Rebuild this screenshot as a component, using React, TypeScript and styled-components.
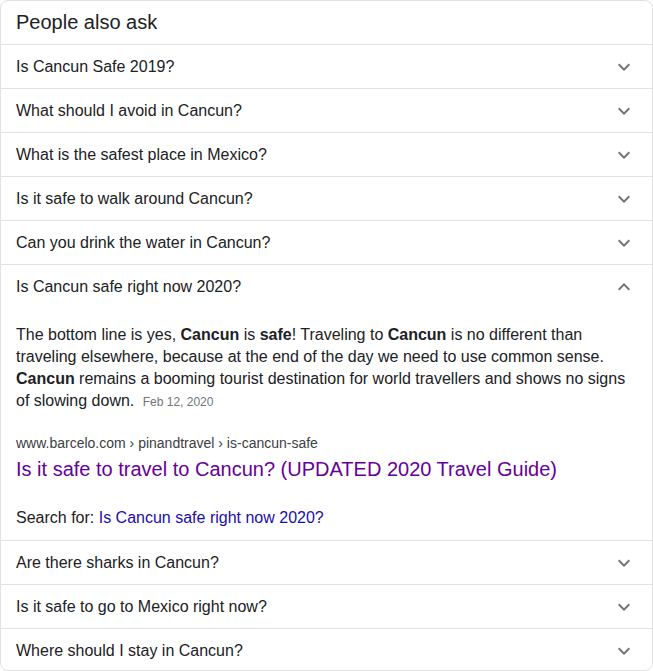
import React from 'react';
import styled, { createGlobalStyle } from 'styled-components';

const Global = createGlobalStyle`
  body {
    margin: 0;
    background: #fff;
    font-family: "Liberation Sans", Arial, sans-serif;
    color: #202124;
  }
`

const Card = styled.div`
  box-sizing: border-box;
  width: 653px;
  height: 671px;
  border: 1px solid #dfe1e5;
  border-radius: 8px;
  overflow: hidden;
  background: #fff;
`

const Heading = styled.div`
  height: 43px;
  display: flex;
  align-items: center;
  padding: 0 16px 0 15px;
  font-size: 20px;
  color: #202124;
  border-bottom: 1px solid #dfe1e5;
`

const Row = styled.div<{ $last?: boolean }>`
  border-bottom: ${p => (p.$last ? 'none' : '1px solid #dfe1e5')};
`

const Question = styled.div`
  height: 43px;
  display: flex;
  align-items: center;
  justify-content: space-between;
  padding: 0 16px 0 15px;
  font-size: 16px;
  color: #202124;
`

const Chevron = styled.svg<{ $up?: boolean }>`
  width: 24px;
  height: 24px;
  fill: #70757a;
  transform: ${p => (p.$up ? 'rotate(180deg)' : 'none')};
`

const Answer = styled.div`
  padding: 16px 16px 11px 15px;
`

const Snippet = styled.div`
  font-size: 16px;
  line-height: 22px;
  color: #202124;
  b { font-weight: bold; }
`

const DateTag = styled.span`
  font-size: 12px;
  color: #70757a;
  margin-left: 4px;
`

const Cite = styled.div`
  margin-top: 20px;
  font-size: 14px;
  line-height: 20px;
  color: #3c4043;
`

const Title = styled.a`
  display: block;
  margin-top: 3px;
  font-size: 20px;
  line-height: 26px;
  color: #660099;
  text-decoration: none;
`

const SearchFor = styled.div`
  margin-top: 25px;
  font-size: 16px;
  line-height: 22px;
  color: #202124;
  a { color: #1a0dab; text-decoration: none; }
`

const Icon = ({ up }: { up?: boolean }) => (
  <Chevron $up={up} viewBox="0 0 24 24">
    <path d="M16.59 8.59L12 13.17 7.41 8.59 6 10l6 6 6-6z" />
  </Chevron>
)

const before = [
  'Is Cancun Safe 2019?',
  'What should I avoid in Cancun?',
  'What is the safest place in Mexico?',
  'Is it safe to walk around Cancun?',
  'Can you drink the water in Cancun?',
]

const after = [
  'Are there sharks in Cancun?',
  'Is it safe to go to Mexico right now?',
  'Where should I stay in Cancun?',
]

function App() {
  return (
    <>
      <Global />
      <Card>
        <Heading>People also ask</Heading>
        {before.map(q => (
          <Row key={q}>
            <Question>{q}<Icon /></Question>
          </Row>
        ))}
        <Row>
          <Question>Is Cancun safe right now 2020?<Icon up /></Question>
          <Answer>
            <Snippet>
              The bottom line is yes, <b>Cancun</b> is <b>safe</b>! Traveling to <b>Cancun</b> is no different than
              traveling elsewhere, because at the end of the day we need to use common sense.{' '}
              <b>Cancun</b> remains a booming tourist destination for world travellers and shows no signs
              of slowing down. <DateTag>Feb 12, 2020</DateTag>
            </Snippet>
            <Cite>www.barcelo.com › pinandtravel › is-cancun-safe</Cite>
            <Title href="#">Is it safe to travel to Cancun? (UPDATED 2020 Travel Guide)</Title>
            <SearchFor>Search for: <a href="#">Is Cancun safe right now 2020?</a></SearchFor>
          </Answer>
        </Row>
        {after.map((q, i) => (
          <Row key={q} $last={i === after.length - 1}>
            <Question>{q}<Icon /></Question>
          </Row>
        ))}
      </Card>
    </>
  );
}

export default App;
